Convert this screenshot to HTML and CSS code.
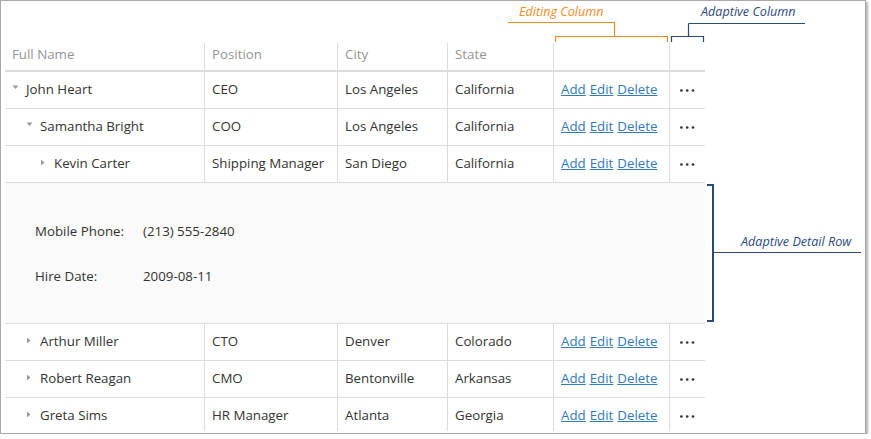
FILE: index.html
```html
<!DOCTYPE html>
<html>
<head>
<meta charset="utf-8">
<link rel="stylesheet" href="styles.css">
</head>
<body>
<div class="frame">
  <div class="grid">
    <div class="row header">
      <div class="cell c1">Full Name</div>
      <div class="cell c2">Position</div>
      <div class="cell c3">City</div>
      <div class="cell c4">State</div>
      <div class="cell c5"></div>
      <div class="cell c6"></div>
    </div>

    <div class="row">
      <div class="cell c1 lvl0"><svg class="exp" viewBox="0 0 14 14"><path d="M0.5 3.5H6.5L3.5 7Z"/></svg>John Heart</div>
      <div class="cell c2">CEO</div>
      <div class="cell c3">Los Angeles</div>
      <div class="cell c4">California</div>
      <div class="cell c5"><span class="links"><a href="#">Add</a><a href="#">Edit</a><a href="#">Delete</a></span></div>
      <div class="cell c6"><svg class="dots" viewBox="0 0 15 3"><circle cx="1.4" cy="1.5" r="1.35"/><circle cx="7.2" cy="1.5" r="1.35"/><circle cx="13" cy="1.5" r="1.35"/></svg></div>
    </div>

    <div class="row">
      <div class="cell c1 lvl1"><svg class="exp" viewBox="0 0 14 14"><path d="M0.5 3.5H6.5L3.5 7Z"/></svg>Samantha Bright</div>
      <div class="cell c2">COO</div>
      <div class="cell c3">Los Angeles</div>
      <div class="cell c4">California</div>
      <div class="cell c5"><span class="links"><a href="#">Add</a><a href="#">Edit</a><a href="#">Delete</a></span></div>
      <div class="cell c6"><svg class="dots" viewBox="0 0 15 3"><circle cx="1.4" cy="1.5" r="1.35"/><circle cx="7.2" cy="1.5" r="1.35"/><circle cx="13" cy="1.5" r="1.35"/></svg></div>
    </div>

    <div class="row">
      <div class="cell c1 lvl2"><svg class="exp" viewBox="0 0 14 14"><path d="M1 3.5V9.5L4.5 6.5Z"/></svg>Kevin Carter</div>
      <div class="cell c2">Shipping Manager</div>
      <div class="cell c3">San Diego</div>
      <div class="cell c4">California</div>
      <div class="cell c5"><span class="links"><a href="#">Add</a><a href="#">Edit</a><a href="#">Delete</a></span></div>
      <div class="cell c6"><svg class="dots" viewBox="0 0 15 3"><circle cx="1.4" cy="1.5" r="1.35"/><circle cx="7.2" cy="1.5" r="1.35"/><circle cx="13" cy="1.5" r="1.35"/></svg></div>
    </div>

    <div class="detail">
      <div class="form">
        <div class="label">Mobile Phone:</div>
        <div class="value">(213) 555-2840</div>
        <div class="label">Hire Date:</div>
        <div class="value">2009-08-11</div>
      </div>
    </div>

    <div class="row">
      <div class="cell c1 lvl1"><svg class="exp" viewBox="0 0 14 14"><path d="M1 3.5V9.5L4.5 6.5Z"/></svg>Arthur Miller</div>
      <div class="cell c2">CTO</div>
      <div class="cell c3">Denver</div>
      <div class="cell c4">Colorado</div>
      <div class="cell c5"><span class="links"><a href="#">Add</a><a href="#">Edit</a><a href="#">Delete</a></span></div>
      <div class="cell c6"><svg class="dots" viewBox="0 0 15 3"><circle cx="1.4" cy="1.5" r="1.35"/><circle cx="7.2" cy="1.5" r="1.35"/><circle cx="13" cy="1.5" r="1.35"/></svg></div>
    </div>

    <div class="row">
      <div class="cell c1 lvl1"><svg class="exp" viewBox="0 0 14 14"><path d="M1 3.5V9.5L4.5 6.5Z"/></svg>Robert Reagan</div>
      <div class="cell c2">CMO</div>
      <div class="cell c3">Bentonville</div>
      <div class="cell c4">Arkansas</div>
      <div class="cell c5"><span class="links"><a href="#">Add</a><a href="#">Edit</a><a href="#">Delete</a></span></div>
      <div class="cell c6"><svg class="dots" viewBox="0 0 15 3"><circle cx="1.4" cy="1.5" r="1.35"/><circle cx="7.2" cy="1.5" r="1.35"/><circle cx="13" cy="1.5" r="1.35"/></svg></div>
    </div>

    <div class="row">
      <div class="cell c1 lvl1"><svg class="exp" viewBox="0 0 14 14"><path d="M1 3.5V9.5L4.5 6.5Z"/></svg>Greta Sims</div>
      <div class="cell c2">HR Manager</div>
      <div class="cell c3">Atlanta</div>
      <div class="cell c4">Georgia</div>
      <div class="cell c5"><span class="links"><a href="#">Add</a><a href="#">Edit</a><a href="#">Delete</a></span></div>
      <div class="cell c6"><svg class="dots" viewBox="0 0 15 3"><circle cx="1.4" cy="1.5" r="1.35"/><circle cx="7.2" cy="1.5" r="1.35"/><circle cx="13" cy="1.5" r="1.35"/></svg></div>
    </div>
  </div>

  <svg class="callouts" width="871" height="439" viewBox="0 0 871 439">
    <g class="orange-lines">
      <path d="M508 22.5H615"/>
      <path d="M614.5 22.5V36.5"/>
      <path d="M555.5 42V36.5H667.5V42"/>
    </g>
    <g class="navy-lines">
      <path d="M688.5 23.5H805"/>
      <path d="M688.5 23.5V36.5"/>
      <path d="M671.5 42V36.5H703.5V42"/>
      <path d="M713 252.5H861"/>
      <path class="thick" d="M707 185H713V321H707"/>
    </g>
  </svg>
  <span class="note note-orange note-editing">Editing Column</span>
  <span class="note note-navy note-adaptive">Adaptive Column</span>
  <span class="note note-navy note-detail">Adaptive Detail Row</span>
</div>
</body>
</html>
```

FILE: styles.css
```css
* { box-sizing: border-box; }

body {
  margin: 0;
  background: #fff;
  font-family: "Open Sans", "Noto Sans", sans-serif;
  font-size: 13.3px;
  color: #333;
}

.frame {
  position: relative;
  width: 866px;
  height: 434px;
  border: 1px solid #a9a9a9;
  box-shadow: 2px 2px 2px rgba(0, 0, 0, 0.3);
  padding: 42px 0 0 4px;
  overflow: hidden;
  background: #fff;
}

.grid {
  width: 700px;
  height: 388px;
  overflow: hidden;
}

.row {
  display: flex;
  height: 37px;
  border-bottom: 1px solid #ddd;
}

.row .cell {
  padding-bottom: 2px;
}

.header {
  height: 29px;
  border-bottom: 2px solid #ddd;
  color: #959595;
}

.header .cell {
  padding-bottom: 6px;
}

.cell {
  display: flex;
  align-items: center;
  padding: 0 7px;
  border-right: 1px solid #ddd;
  white-space: nowrap;
  overflow: hidden;
}

.c1 { width: 200px; }
.c2 { width: 133px; }
.c3 { width: 110px; }
.c4 { width: 106px; }
.c5 { width: 116px; }
.row .c6 { width: 35px; border-right: 0; padding: 0; justify-content: center; }

.row .lvl0 { padding-left: 7px; }
.row .lvl1 { padding-left: 21px; }
.row .lvl2 { padding-left: 35px; }

.exp {
  width: 14px;
  height: 14px;
  flex-shrink: 0;
  fill: #9a9a9a;
}

.links {
  display: flex;
  gap: 4px;
}

.links a {
  color: #337ab7;
  text-decoration: underline;
}

.dots {
  width: 15px;
  height: 3px;
  fill: #333;
}

.detail {
  height: 141px;
  background: #fafafa;
  border-bottom: 1px solid #ddd;
  padding: 39px 0 0 30px;
}

.form {
  display: grid;
  grid-template-columns: 108px auto;
  row-gap: 27px;
  line-height: 18px;
}

.callouts {
  position: absolute;
  left: -1px;
  top: -1px;
  pointer-events: none;
  fill: none;
}

.orange-lines { stroke: #f28a1d; stroke-width: 1.2; }
.navy-lines { stroke: #2b4a7c; stroke-width: 1.2; }
.navy-lines .thick { stroke-width: 2; }

.note {
  position: absolute;
  font-style: italic;
  font-size: 12.6px;
  line-height: 16px;
  white-space: nowrap;
}

.note-orange { color: #f28a1d; }
.note-navy { color: #2b4a7c; }

.note-editing { left: 518px; top: 3px; }
.note-adaptive { left: 700px; top: 3px; }
.note-detail { left: 740px; top: 233px; }
```
